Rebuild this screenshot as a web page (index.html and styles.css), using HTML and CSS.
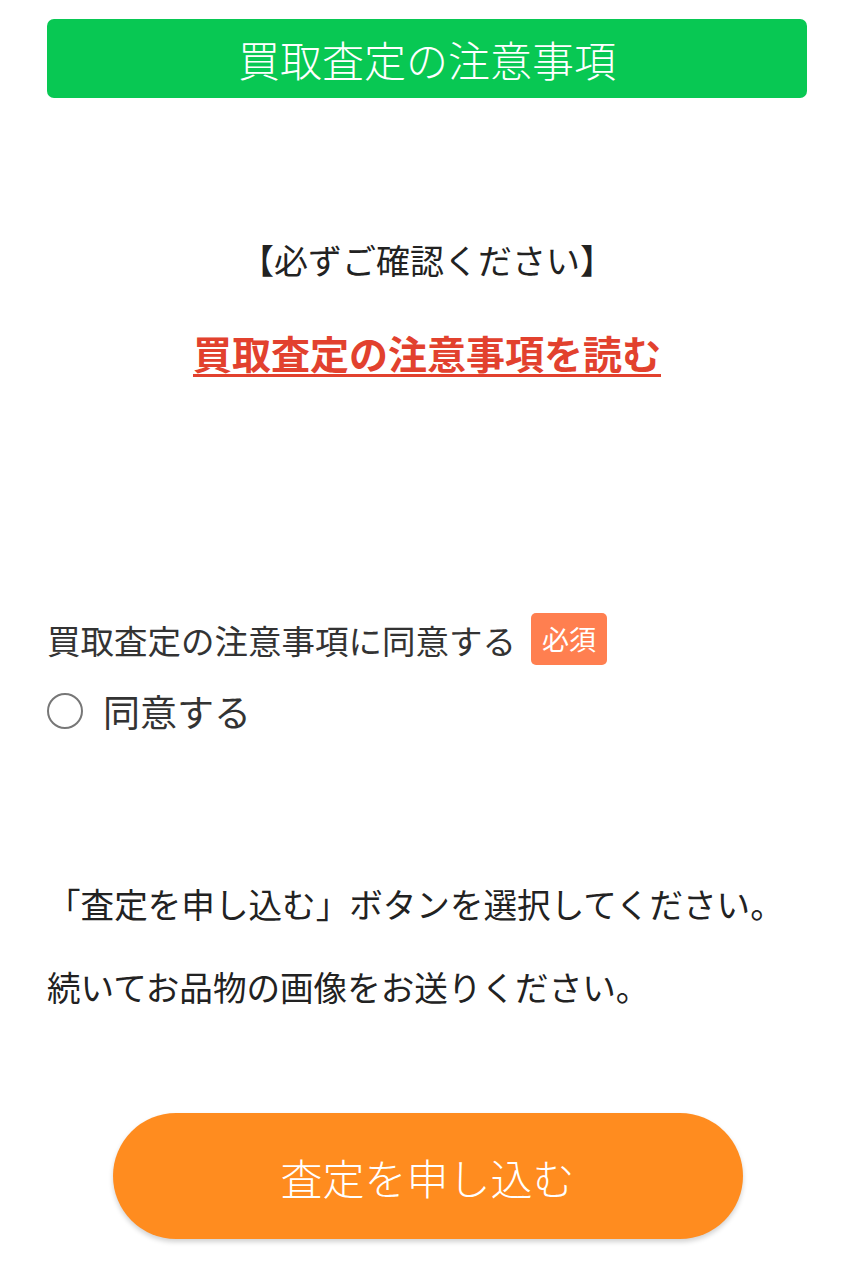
FILE: index.html
```html
<!DOCTYPE html>
<html lang="ja">
<head>
    <meta charset="UTF-8">
    <meta name="viewport" content="width=device-width, initial-scale=1.0">
    <title>買取査定の注意事項</title>
    <link rel="stylesheet" href="styles.css">
</head>
<body>
    <div class="wrap">
        <h1 class="title-bar">買取査定の注意事項</h1>

        <p class="notice">【必ずご確認ください】</p>
        <p class="notice-link"><a href="#">買取査定の注意事項を読む</a></p>

        <form class="agree-form">
            <div class="field-label">
                <span>買取査定の注意事項に同意する</span>
                <span class="required">必須</span>
            </div>
            <label class="radio-row">
                <input type="radio" name="agree" value="1">
                <span>同意する</span>
            </label>

            <p class="guide guide-first">「査定を申し込む」ボタンを選択してください。</p>
            <p class="guide guide-second">続いてお品物の画像をお送りください。</p>

            <div class="submit-area">
                <button type="submit" class="submit-btn">査定を申し込む</button>
            </div>
        </form>
    </div>
</body>
</html>
```

FILE: styles.css
```css
body {
    margin: 0;
    padding: 0;
    background-color: #fff;
    color: #222;
    font-family: 'Noto Sans CJK JP', 'Noto Sans', sans-serif;
}

.wrap {
    padding: 19px 48px 40px 47px;
}

.title-bar {
    height: 79px;
    margin: 0;
    background-color: #08c853;
    border-radius: 7px;
    color: #fff;
    font-size: 42px;
    font-weight: 300;
    line-height: 79px;
    text-align: center;
}

.notice {
    margin: 137px 0 0;
    font-size: 34px;
    line-height: 50px;
    text-align: center;
}

.notice-link {
    margin: 37px 0 0;
    font-size: 39px;
    font-weight: bold;
    line-height: 60px;
    text-align: center;
}

.notice-link a {
    color: #e2412e;
    text-decoration: underline;
    text-decoration-thickness: 3px;
    text-underline-offset: 5px;
}

.agree-form {
    margin-top: 231px;
}

.field-label {
    display: flex;
    align-items: center;
    gap: 15px;
    height: 52px;
    font-size: 33.5px;
    color: #333;
}

.required {
    display: inline-block;
    padding: 0 11px;
    height: 52px;
    line-height: 52px;
    background-color: #ff7f50;
    border-radius: 5px;
    color: #fff;
    font-size: 27px;
}

.radio-row {
    display: flex;
    align-items: center;
    gap: 20px;
    height: 50px;
    margin-top: 21px;
    font-size: 37px;
    color: #333;
}

.radio-row input {
    appearance: none;
    -webkit-appearance: none;
    width: 36px;
    height: 36px;
    margin: 0;
    border: 2px solid #777;
    border-radius: 50%;
    box-sizing: border-box;
}

.guide {
    margin: 0;
    font-size: 33.6px;
    line-height: 50px;
}

.guide-first {
    margin-top: 143px;
}

.guide-second {
    margin-top: 33px;
}

.submit-area {
    display: flex;
    justify-content: center;
    margin-top: 101px;
}

.submit-btn {
    width: 630px;
    height: 126px;
    margin-left: 1px;
    border: none;
    border-radius: 63px;
    background-color: #ff8c1f;
    box-shadow: 0 3px 5px rgba(0, 0, 0, 0.18);
    color: #fff;
    font-family: inherit;
    font-size: 42px;
    font-weight: 300;
    cursor: pointer;
}
```
